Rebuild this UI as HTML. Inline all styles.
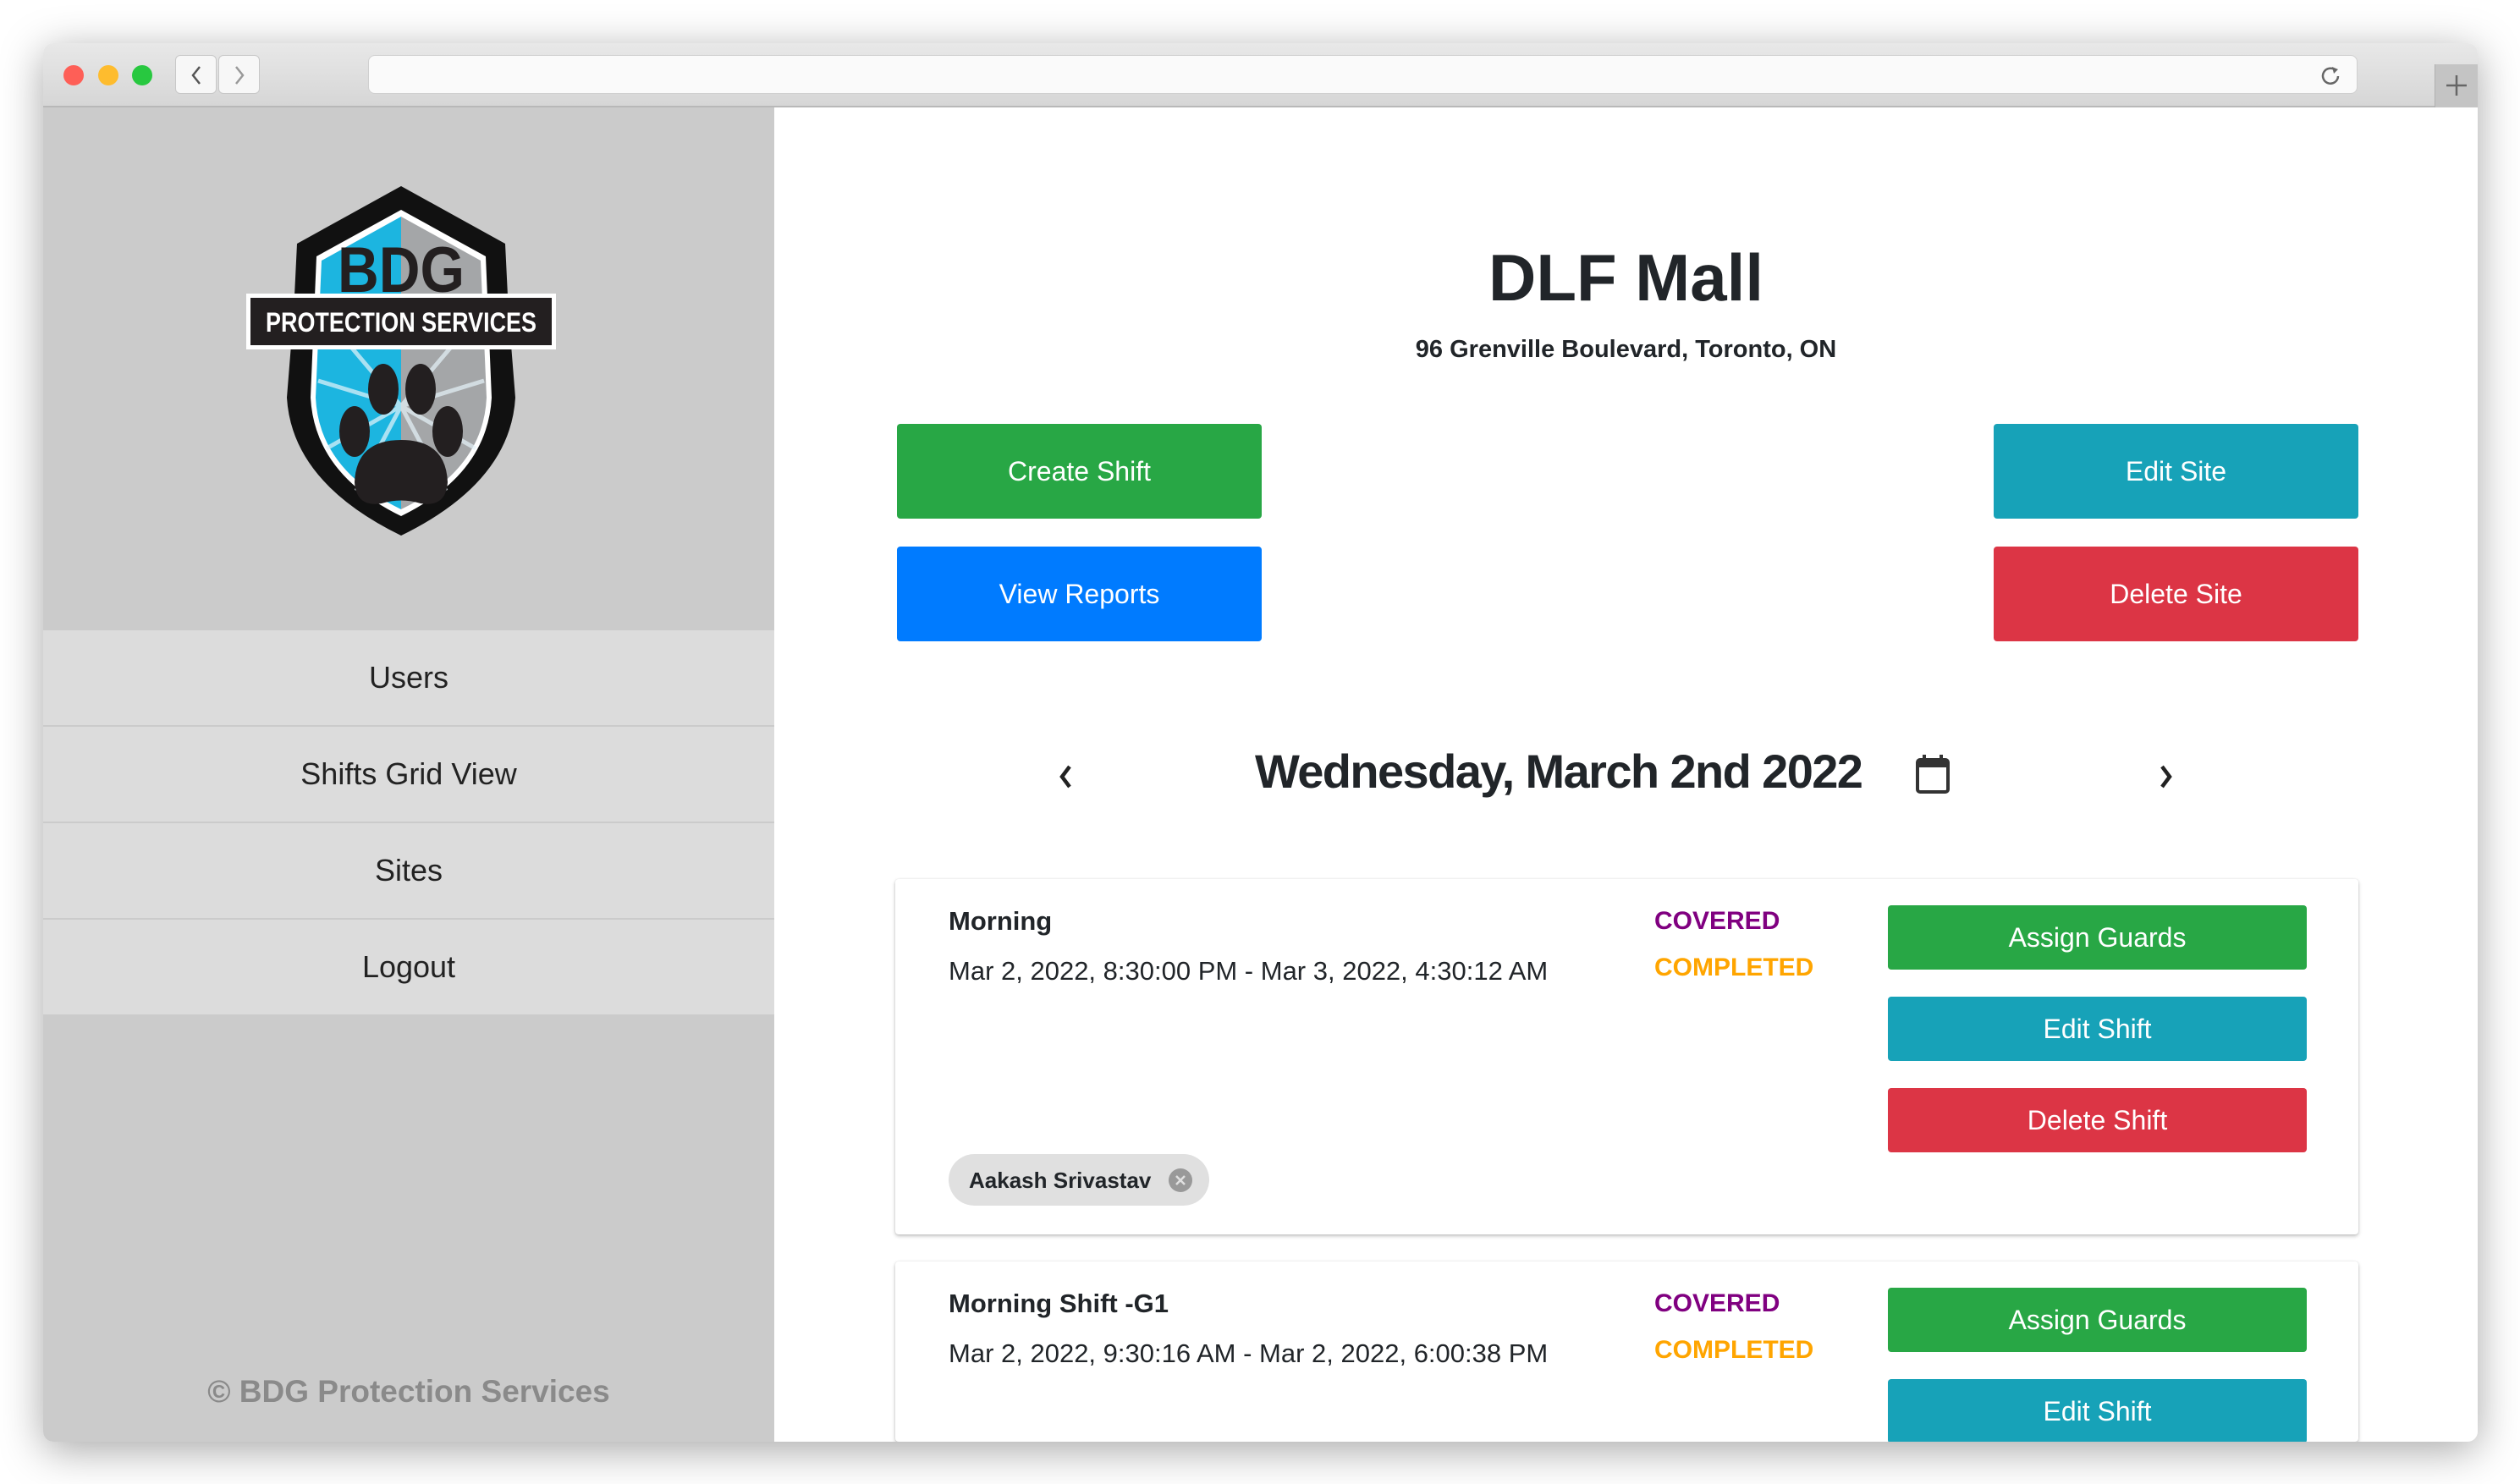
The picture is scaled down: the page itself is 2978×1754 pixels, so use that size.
<!DOCTYPE html>
<html><head><meta charset="utf-8"><style>
*{box-sizing:border-box;margin:0;padding:0}
body{width:2978px;height:1754px;background:#fff;font-family:"Liberation Sans",sans-serif;position:relative;overflow:hidden;color:#212529}
.win{position:absolute;left:51px;top:51px;width:2877px;height:1653px;border-radius:12px;overflow:hidden;box-shadow:0 10px 50px rgba(0,0,0,.35);background:#fff}
.bar{position:absolute;left:0;top:0;width:100%;height:76px;background:linear-gradient(#e8e8e8,#d6d6d6);border-bottom:2px solid #b8b8b8}
.dot{position:absolute;top:26px;width:24px;height:24px;border-radius:50%}
.nav{position:absolute;top:14px;width:49px;height:46px;background:#f7f7f7;border:1px solid #c8c8c8;border-radius:6px}
.url{position:absolute;left:384px;top:14px;width:2351px;height:46px;background:#fafafa;border:1px solid #d0d0d0;border-radius:8px}
.side{position:absolute;left:0;top:76px;width:864px;height:1577px;background:#cbcbcb}
.mi{position:absolute;left:0;width:864px;height:112px;background:#dcdcdc;text-align:center;line-height:112px;font-size:36px;color:#222}
.btn{position:absolute;color:#fff;text-align:center;border-radius:4px;font-size:32px}
.g{background:#28a745}.b{background:#007bff}.c{background:#17a2b8}.r{background:#dc3545}
.card{position:absolute;left:1007px;width:1729px;background:#fff;box-shadow:0 2px 4px rgba(0,0,0,.25),0 0 2px rgba(0,0,0,.08);border-radius:4px;overflow:hidden}
.t{position:absolute;white-space:nowrap}
</style></head><body>
<div class="win">
 <div class="bar">
  <div class="dot" style="left:24px;background:#fe5f57"></div>
  <div class="dot" style="left:65px;background:#febc2e"></div>
  <div class="dot" style="left:105px;background:#28c840"></div>
  <div class="nav" style="left:156px"><svg width="49" height="46"><path d="M28 13 L20 23 L28 33" stroke="#555" stroke-width="2.5" fill="none"/></svg></div>
  <div class="nav" style="left:207px"><svg width="49" height="46"><path d="M20 13 L28 23 L20 33" stroke="#999" stroke-width="2.5" fill="none"/></svg></div>
  <div class="url"><svg style="position:absolute;right:18px;top:10px" width="26" height="26"><path d="M19 7 A9 9 0 1 0 22 14" stroke="#666" stroke-width="2.5" fill="none"/><path d="M15 3 L22 6 L17 11Z" fill="#666"/></svg></div>
  <div style="position:absolute;left:2826px;top:25px;width:51px;height:51px;background:#c4c4c4;border-left:1px solid #b0b0b0"><svg width="51" height="51"><path d="M25 13V37M13 25H37" stroke="#666" stroke-width="2.5"/></svg></div>
 </div>
 <div class="side">
  <svg style="position:absolute;left:240px;top:93px" width="366" height="413" viewBox="0 0 366 413">
   <path d="M183 0 L306 68 L310 150 L318 250 Q312 350 183 413 Q54 350 48 250 L56 150 L60 68Z" fill="#111"/>
   <path d="M183 28 L283 83 L290 250 Q285 340 183 390 Q81 340 76 250 L83 83Z" fill="#fff"/>
   <path d="M183 36 L277 88 L284 250 Q280 335 183 382 Z" fill="#a4a6a8"/>
   <path d="M183 36 L89 88 L82 250 Q86 335 183 382 Z" fill="#1cb5e0"/>
   <g stroke="#e6f4fa" stroke-width="5" opacity=".7"><path d="M183 260 L90 150M183 260 L85 230M183 260 L95 310M183 260 L130 360M183 260 L276 150M183 260 L281 230M183 260 L271 310M183 260 L236 360"/></g>
   <text x="183" y="125" text-anchor="middle" font-family="Liberation Sans" font-weight="bold" font-size="76" fill="#231f20" textLength="150" lengthAdjust="spacingAndGlyphs">BDG</text>
   <rect x="0" y="127" width="366" height="66" fill="#fff"/>
   <rect x="5" y="132" width="356" height="56" fill="#231f20"/>
   <text x="183" y="172" text-anchor="middle" font-family="Liberation Sans" font-weight="bold" font-size="32" fill="#fff" textLength="320" lengthAdjust="spacingAndGlyphs">PROTECTION SERVICES</text>
   <g fill="#231f20"><ellipse cx="162" cy="240" rx="18" ry="30"/><ellipse cx="206" cy="240" rx="18" ry="30"/><ellipse cx="128" cy="290" rx="18" ry="30"/><ellipse cx="238" cy="290" rx="18" ry="30"/><path d="M183 300 Q130 300 128 350 Q130 380 160 375 Q183 368 206 375 Q236 380 238 350 Q236 300 183 300Z"/></g>
  </svg>
  <div class="mi" style="top:618px">Users</div>
  <div class="mi" style="top:732px">Shifts Grid View</div>
  <div class="mi" style="top:846px">Sites</div>
  <div class="mi" style="top:960px">Logout</div>
  <div class="t" style="left:0;width:864px;text-align:center;top:1497px;font-size:37px;color:#8a8a8a;font-weight:bold">© BDG Protection Services</div>
 </div>
 <div class="t" style="left:864px;width:2013px;text-align:center;top:232px;font-size:78px;font-weight:bold">DLF Mall</div>
 <div class="t" style="left:864px;width:2013px;text-align:center;top:346px;font-size:29px;font-weight:bold">96 Grenville Boulevard, Toronto, ON</div>
 <div class="btn g" style="left:1009px;top:450px;width:431px;height:112px;line-height:112px">Create Shift</div>
 <div class="btn b" style="left:1009px;top:595px;width:431px;height:112px;line-height:112px">View Reports</div>
 <div class="btn c" style="left:2305px;top:450px;width:431px;height:112px;line-height:112px">Edit Site</div>
 <div class="btn r" style="left:2305px;top:595px;width:431px;height:112px;line-height:112px">Delete Site</div>
 <svg style="position:absolute;left:1197px;top:850px" width="24" height="34"><path d="M16 5 L7 17 L16 29" stroke="#222" stroke-width="4.5" fill="none"/></svg>
 <div class="t" style="left:1432px;top:828px;font-size:56px;font-weight:bold;letter-spacing:-1.6px">Wednesday, March 2nd 2022</div>
 <svg style="position:absolute;left:2212px;top:839px" width="42" height="50"><rect x="3" y="8" width="36" height="38" rx="3" fill="none" stroke="#333" stroke-width="4"/><rect x="3" y="8" width="36" height="9" fill="#333"/><path d="M11 2V10M31 2V10" stroke="#333" stroke-width="4"/></svg>
 <svg style="position:absolute;left:2497px;top:850px" width="24" height="34"><path d="M7 5 L16 17 L7 29" stroke="#222" stroke-width="4.5" fill="none"/></svg>

 <div class="card" style="top:988px;height:420px">
  <div class="t" style="left:63px;top:32px;font-size:31px;font-weight:bold">Morning</div>
  <div class="t" style="left:63px;top:91px;font-size:31px">Mar 2, 2022, 8:30:00 PM - Mar 3, 2022, 4:30:12 AM</div>
  <div class="t" style="left:897px;top:33px;font-size:30px;font-weight:bold;color:#800080">COVERED</div>
  <div class="t" style="left:897px;top:88px;font-size:30px;font-weight:bold;color:#ffa500">COMPLETED</div>
  <div class="btn g" style="left:1173px;top:31px;width:495px;height:76px;line-height:76px">Assign Guards</div>
  <div class="btn c" style="left:1173px;top:139px;width:495px;height:76px;line-height:76px">Edit Shift</div>
  <div class="btn r" style="left:1173px;top:247px;width:495px;height:76px;line-height:76px">Delete Shift</div>
  <div style="position:absolute;left:63px;top:325px;width:308px;height:61px;border-radius:31px;background:#e0e0e0"><span class="t" style="left:24px;top:16px;font-size:26px;font-weight:bold">Aakash Srivastav</span><svg style="position:absolute;left:259px;top:16px" width="30" height="30"><circle cx="15" cy="15" r="14" fill="#999"/><path d="M10 10L20 20M20 10L10 20" stroke="#e0e0e0" stroke-width="2.5"/></svg></div>
 </div>
 <div class="card" style="top:1440px;height:213px">
  <div class="t" style="left:63px;top:32px;font-size:31px;font-weight:bold">Morning Shift -G1</div>
  <div class="t" style="left:63px;top:91px;font-size:31px">Mar 2, 2022, 9:30:16 AM - Mar 2, 2022, 6:00:38 PM</div>
  <div class="t" style="left:897px;top:33px;font-size:30px;font-weight:bold;color:#800080">COVERED</div>
  <div class="t" style="left:897px;top:88px;font-size:30px;font-weight:bold;color:#ffa500">COMPLETED</div>
  <div class="btn g" style="left:1173px;top:31px;width:495px;height:76px;line-height:76px">Assign Guards</div>
  <div class="btn c" style="left:1173px;top:139px;width:495px;height:76px;line-height:76px">Edit Shift</div>
 </div>
</div>
</body></html>
